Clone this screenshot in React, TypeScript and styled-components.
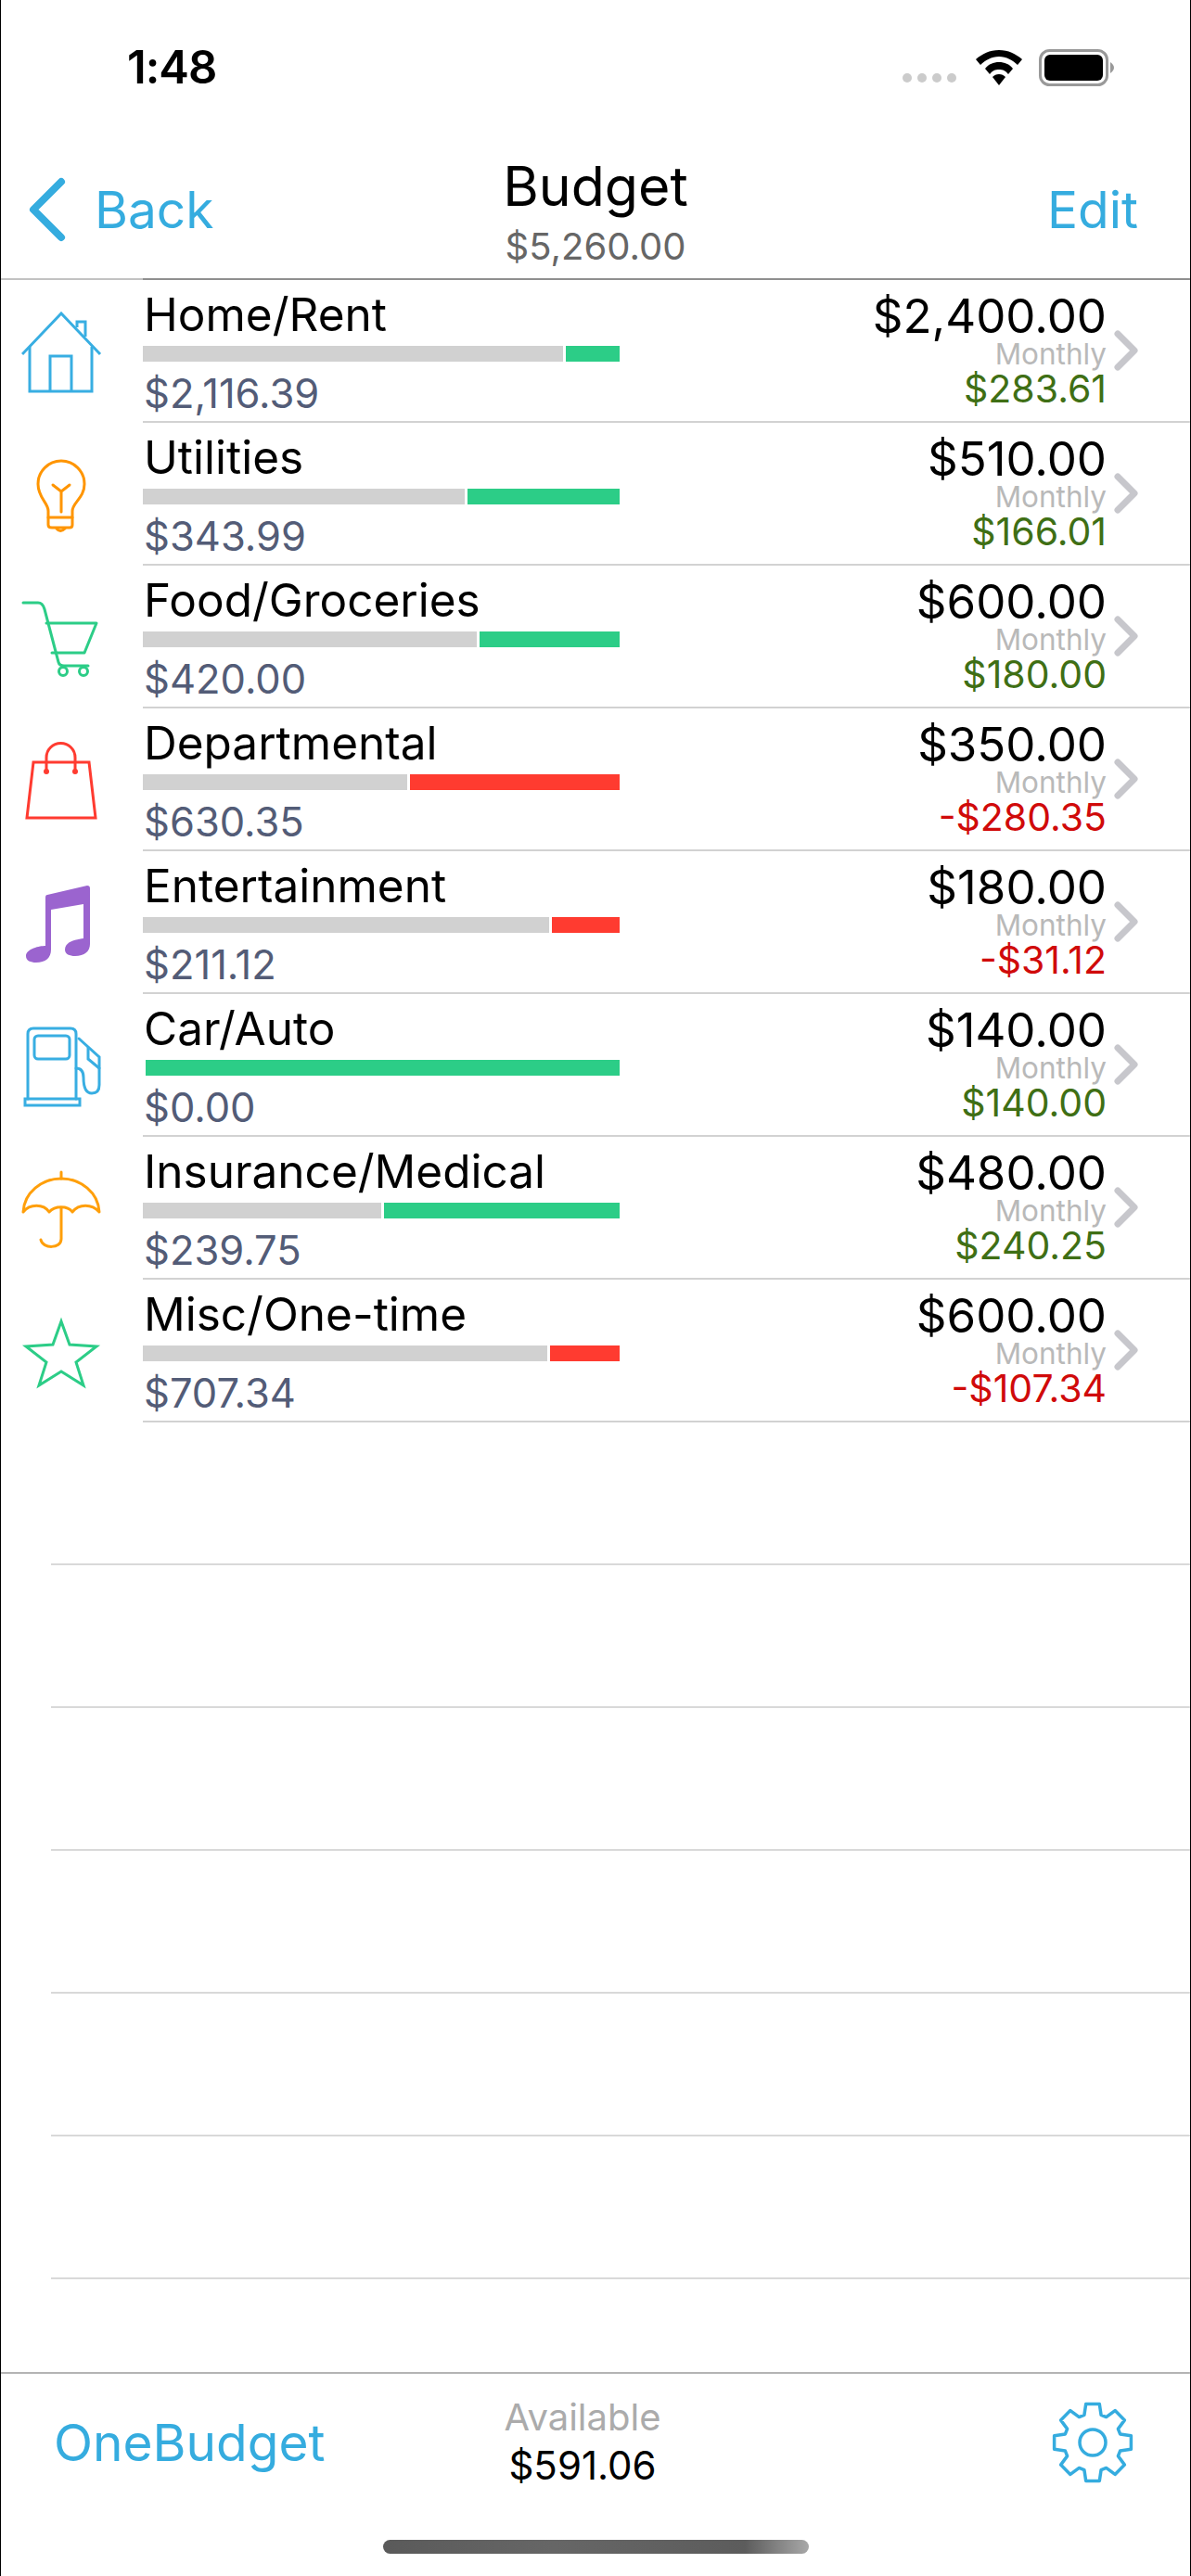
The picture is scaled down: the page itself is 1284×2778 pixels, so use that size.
import React from 'react';
import styled, {createGlobalStyle} from 'styled-components';

const BLUE = '#35acdf';

const GlobalStyle = createGlobalStyle`
  html, body {
    margin: 0;
    padding: 0;
    background: #fff;
  }
  body {
    font-family: Inter, "Noto Sans", "Liberation Sans", sans-serif;
  }
`;

const Screen = styled.div`
  width: 1284px;
  height: 2778px;
  box-sizing: border-box;
  border-left: 1px solid #000;
  border-right: 1px solid #000;
  display: flex;
  flex-direction: column;
  overflow: hidden;
  background: #fff;
`;

const StatusBar = styled.div`
  height: 124px;
  flex: none;
  display: flex;
  justify-content: space-between;
  padding: 48px 81px 0 136px;
  box-sizing: border-box;
`;

const Clock = styled.div`
  font-size: 49px;
  font-weight: 600;
  line-height: 50px;
  color: #000;
  letter-spacing: -1px;
`;

const StatusIcons = styled.div`
  display: flex;
  align-items: flex-end;
  height: 44px;
  gap: 18px;
`;

const SignalDots = styled.div`
  display: flex;
  gap: 6px;
  padding-bottom: 3px;
  margin-right: 3px;
  span {
    width: 10px;
    height: 10px;
    border-radius: 5px;
    background: #cbcbcb;
  }
`;

const NavBar = styled.div`
  height: 178px;
  flex: none;
  box-sizing: border-box;
  display: grid;
  grid-template-columns: 1fr auto 1fr;
  align-items: start;
  padding: 0 29px;
  border-bottom: 2px solid;
  border-image: linear-gradient(90deg, #c2c2c2 154px, #8f8f8f 154px) 1;
`;

const BackButton = styled.div`
  display: flex;
  align-items: center;
  gap: 28px;
  margin-top: 64px;
  height: 76px;
`;

const NavAction = styled.span`
  font-size: 55px;
  line-height: 76px;
  color: ${BLUE};
`;

const EditAction = styled(NavAction)`
  margin: 64px 27px 0 0;
  justify-self: end;
`;

const TitleBlock = styled.div`
  display: flex;
  flex-direction: column;
  align-items: center;
`;

const Title = styled.div`
  font-size: 59px;
  line-height: 78px;
  color: #000;
  margin-top: 38px;
`;

const SubTitle = styled.div`
  font-size: 40px;
  line-height: 50px;
  color: #666;
  margin-top: 1px;
`;

const List = styled.div`
  flex: 1;
  min-height: 0;
`;

const Row = styled.div`
  height: 154px;
  display: flex;
`;

const IconCell = styled.div`
  width: 153px;
  flex: none;
  display: flex;
  align-items: center;
  padding: 4px 0 0 22px;
  box-sizing: border-box;
`;

const RowBody = styled.div`
  flex: 1;
  min-width: 0;
  display: flex;
  justify-content: space-between;
  box-sizing: border-box;
  border-bottom: 2px solid #d2d2d2;
  padding-right: 55px;
`;

const LeftColumn = styled.div`
  width: 514px;
`;

const CategoryName = styled.div`
  font-size: 49.5px;
  line-height: 58px;
  color: #000;
  padding-top: 8px;
  margin-left: 1px;
`;

const Bar = styled.div`
  height: 17px;
  display: flex;
  gap: 3px;
  margin-top: 5px;
`;

const BarSpent = styled.div`
  background: #d1d1d1;
`;

const BarRest = styled.div<{$over: boolean}>`
  flex: 1;
  background: ${p => (p.$over ? '#ff3b30' : '#2ccd87')};
`;

const SpentText = styled.div`
  font-size: 43.5px;
  line-height: 52px;
  color: #535c77;
  margin-top: 8px;
  margin-left: 1px;
`;

const RightColumn = styled.div`
  display: flex;
  align-items: center;
  gap: 7px;
`;

const Figures = styled.div`
  display: flex;
  flex-direction: column;
  align-items: flex-end;
  height: 100%;
`;

const Amount = styled.div`
  font-size: 51px;
  line-height: 54px;
  color: #000;
  padding-top: 12px;
`;

const Period = styled.div`
  font-size: 31.5px;
  line-height: 28px;
  color: #b9b9b9;
`;

const Remaining = styled.div<{$over: boolean}>`
  font-size: 41px;
  line-height: 42px;
  margin-top: 2px;
  color: ${p => (p.$over ? '#d00a0a' : '#3f6f15')};
`;

const EmptyRow = styled.div`
  height: 154px;
  box-sizing: border-box;
  margin-left: 54px;
  border-bottom: 2px solid #d9d9d9;
`;

const Footer = styled.div`
  height: 220px;
  flex: none;
  box-sizing: border-box;
  border-top: 2px solid #b4b4b4;
  position: relative;
  display: grid;
  grid-template-columns: 1fr auto 1fr;
  align-items: start;
  padding: 24px 60px 0 57px;
`;

const BrandLink = styled.div`
  font-size: 55px;
  line-height: 76px;
  color: ${BLUE};
  margin-top: 12px;
`;

const Available = styled.div`
  display: flex;
  flex-direction: column;
  align-items: center;
  margin-right: 25px;
`;

const AvailableLabel = styled.div`
  font-size: 40px;
  line-height: 46px;
  color: #ababab;
`;

const AvailableValue = styled.div`
  font-size: 42px;
  line-height: 50px;
  color: #000;
  margin-top: 4px;
`;

const GearWrap = styled.div`
  justify-self: end;
  margin-top: 5px;
  height: 90px;
`;

const HomeIndicator = styled.div`
  position: absolute;
  left: 412px;
  top: 179px;
  width: 459px;
  height: 15px;
  border-radius: 8px;
  background: linear-gradient(90deg, #5a5a5a 0%, #666 40%, #5c5c5c 85%, #a8a8a8 100%);
`;

const categories = [
    {name: 'Home/Rent', budget: 2400, spent: 2116.39, icon: 'home'},
    {name: 'Utilities', budget: 510, spent: 343.99, icon: 'bulb'},
    {name: 'Food/Groceries', budget: 600, spent: 420, icon: 'cart'},
    {name: 'Departmental', budget: 350, spent: 630.35, icon: 'bag'},
    {name: 'Entertainment', budget: 180, spent: 211.12, icon: 'music'},
    {name: 'Car/Auto', budget: 140, spent: 0, icon: 'pump'},
    {name: 'Insurance/Medical', budget: 480, spent: 239.75, icon: 'umbrella'},
    {name: 'Misc/One-time', budget: 600, spent: 707.34, icon: 'star'},
];

const money = (v: number) =>
    (v < 0 ? '-' : '') + '$' + Math.abs(v).toLocaleString('en-US', {minimumFractionDigits: 2, maximumFractionDigits: 2});

const gearPath = () => {
    const pts: string[] = [];
    const polar = (deg: number, r: number) => {
        const a = (deg * Math.PI) / 180;
        return `${(45 + r * Math.sin(a)).toFixed(1)} ${(45 - r * Math.cos(a)).toFixed(1)}`;
    };
    for (let i = 0; i < 8; i++) {
        const c = i * 45;
        pts.push(polar(c - 17, 31), polar(c - 10, 42), polar(c + 10, 42), polar(c + 17, 31));
    }
    return 'M' + pts.join('L') + 'Z';
};

const CategoryIcon: React.FC<{kind: string}> = ({kind}) => {
    const line = {fill: 'none', strokeWidth: 3, strokeLinejoin: 'round', strokeLinecap: 'round'} as const;
    switch (kind) {
        case 'home':
            return (
                <svg width="87" height="90" viewBox="0 0 87 90">
                    <g {...line} stroke="#38aee2" strokeLinecap="butt" strokeLinejoin="miter">
                        <path d="M1 46 L43 2 L85 46"/>
                        <path d="M9 38 V86 H76 V38"/>
                        <path d="M31 86 V48 H54 V86"/>
                        <path d="M60 17 V11 H69 V27"/>
                    </g>
                </svg>
            );
        case 'bulb':
            return (
                <svg width="87" height="90" viewBox="0 0 87 90">
                    <g {...line} stroke="#ff9500">
                        <path d="M29 68 V61 C29 52 18 47 18 32 A24.5 24.5 0 0 1 68 32 C68 47 55 52 55 61 V68 Z"/>
                        <path d="M29 68 V76 Q29 79 33 79 H52 Q55 79 55 76 V68"/>
                        <path d="M38 80 Q42 85 47 80"/>
                        <path d="M43 62 V40 L34 33 M43 40 L52 33"/>
                    </g>
                </svg>
            );
        case 'cart':
            return (
                <svg width="87" height="90" viewBox="0 0 87 90">
                    <g {...line} stroke="#2ccd87">
                        <path d="M2 6 H18 Q23 6 25 13 L40 70 Q41 74 46 74 H72"/>
                        <path d="M27 28 H81 L68 60 H33"/>
                        <circle cx="45" cy="80" r="4.5"/>
                        <circle cx="67" cy="80" r="4.5"/>
                    </g>
                </svg>
            );
        case 'bag':
            return (
                <svg width="87" height="90" viewBox="0 0 87 90">
                    <g {...line} stroke="#ff3b30" strokeLinejoin="miter">
                        <path d="M13 24 H73 L80 84 H6 Z"/>
                        <path d="M27 34 V19 A15.5 15.5 0 0 1 58 19 V34"/>
                    </g>
                    <circle cx="27" cy="34" r="3" fill="#ff3b30"/>
                    <circle cx="58" cy="34" r="3" fill="#ff3b30"/>
                </svg>
            );
        case 'music':
            return (
                <svg width="87" height="90" viewBox="0 0 87 90">
                    <path
                        fill="#9b64cf"
                        d="M28 13 Q26 13 26 16 V68 C20 68 5 71 5 79 C5 84 10 86 16 86 C26 86 32 81 32 72 V29 L67 23 V60 C60 61 47 63 47 72 C47 77 52 79 58 79 C68 79 74 74 74 66 V6 Q74 3 71 3 Z"/>
                </svg>
            );
        case 'pump':
            return (
                <svg width="87" height="90" viewBox="0 0 87 90">
                    <g {...line} stroke="#38aee2" strokeLinejoin="miter">
                        <path d="M7 79 V9 Q7 3 13 3 H53 Q59 3 59 9 V79"/>
                        <rect x="14" y="11" width="38" height="25" rx="4"/>
                        <path d="M4 79 H63 V86 H4 Z"/>
                        <path d="M59 46 Q67 46 67 56 Q67 73 76 73 Q84 73 84 64 V34 L62 14"/>
                        <path d="M72 24 V36 L84 46"/>
                    </g>
                </svg>
            );
        case 'umbrella':
            return (
                <svg width="87" height="90" viewBox="0 0 87 90">
                    <g {...line} stroke="#ff9f0a">
                        <path d="M2 47 C3 26 22 11 43 11 C64 11 83 26 84 47 C76 38 62 38 55 47 C50 40 36 40 30 47 C24 38 9 38 2 47 Z"/>
                        <path d="M43 4 V11"/>
                        <path d="M43 43 V76 C43 87 23 87 21 77"/>
                    </g>
                </svg>
            );
        default:
            return (
                <svg width="87" height="90" viewBox="0 0 87 90">
                    <path
                        {...line}
                        stroke="#2ccd87"
                        strokeLinejoin="miter"
                        d="M43 11 L52 36 L81 38 L59 55 L67 80 L43 65 L19 80 L27 55 L5 38 L34 36 Z"/>
                </svg>
            );
    }
};

const CategoryRow: React.FC<(typeof categories)[number]> = ({name, budget, spent, icon}) => {
    const over = spent > budget;
    const ratio = over ? budget / spent : spent / budget;
    const left = budget - spent;
    return (
        <Row>
            <IconCell><CategoryIcon kind={icon}/></IconCell>
            <RowBody>
                <LeftColumn>
                    <CategoryName>{name}</CategoryName>
                    <Bar>
                        <BarSpent style={{width: `${(ratio * 100).toFixed(2)}%`}}/>
                        <BarRest $over={over}/>
                    </Bar>
                    <SpentText>{money(spent)}</SpentText>
                </LeftColumn>
                <RightColumn>
                    <Figures>
                        <Amount>{money(budget)}</Amount>
                        <Period>Monthly</Period>
                        <Remaining $over={over}>{money(left)}</Remaining>
                    </Figures>
                    <svg width="28" height="44" viewBox="0 0 28 44">
                        <path d="M5 4 L23 22 L5 40" fill="none" stroke="#c7c7cc" strokeWidth="7" strokeLinecap="round" strokeLinejoin="round"/>
                    </svg>
                </RightColumn>
            </RowBody>
        </Row>
    );
};

const App: React.FC = () => {
    return (
        <Screen>
            <GlobalStyle/>
            <StatusBar>
                <Clock>1:48</Clock>
                <StatusIcons>
                    <SignalDots><span/><span/><span/><span/></SignalDots>
                    <svg width="50" height="38" viewBox="0 0 50 38">
                        <path d="M25 0 C15 0 7 4 0 10 L5 16 C10 11 17 7 25 7 C33 7 40 11 45 16 L50 10 C43 4 35 0 25 0 Z"/>
                        <path d="M25 13 C19 13 14 15 10 20 L15 26 C18 22 21 21 25 21 C29 21 32 22 35 26 L40 20 C36 15 31 13 25 13 Z"/>
                        <path d="M25 26 C22 26 20 27 18 29 L25 38 L32 29 C30 27 28 26 25 26 Z"/>
                    </svg>
                    <svg width="82" height="40" viewBox="0 0 82 40" style={{marginBottom: -1}}>
                        <rect x="1.5" y="1.5" width="72" height="37" rx="10" fill="none" stroke="#999" strokeWidth="3"/>
                        <rect x="6" y="6" width="63" height="28" rx="6" fill="#000"/>
                        <path d="M77 14 Q81 17 81 20 Q81 23 77 26 Z" fill="#999"/>
                    </svg>
                </StatusIcons>
            </StatusBar>
            <NavBar>
                <BackButton>
                    <svg width="44" height="70" viewBox="0 0 44 70">
                        <path d="M36 5 L6 35 L36 65" fill="none" stroke={BLUE} strokeWidth="8" strokeLinecap="round" strokeLinejoin="round"/>
                    </svg>
                    <NavAction>Back</NavAction>
                </BackButton>
                <TitleBlock>
                    <Title>Budget</Title>
                    <SubTitle>$5,260.00</SubTitle>
                </TitleBlock>
                <EditAction>Edit</EditAction>
            </NavBar>
            <List>
                {categories.map(c => <CategoryRow key={c.name} {...c}/>)}
                {[0, 1, 2, 3, 4, 5].map(i => <EmptyRow key={i}/>)}
            </List>
            <Footer>
                <BrandLink>OneBudget</BrandLink>
                <Available>
                    <AvailableLabel>Available</AvailableLabel>
                    <AvailableValue>$591.06</AvailableValue>
                </Available>
                <GearWrap>
                    <svg width="90" height="90" viewBox="0 0 90 90">
                        <path d={gearPath()} fill="none" stroke={BLUE} strokeWidth="3.5" strokeLinejoin="round"/>
                        <circle cx="45" cy="45" r="14" fill="none" stroke={BLUE} strokeWidth="3.5"/>
                    </svg>
                </GearWrap>
                <HomeIndicator/>
            </Footer>
        </Screen>
    );
};

export default App;
